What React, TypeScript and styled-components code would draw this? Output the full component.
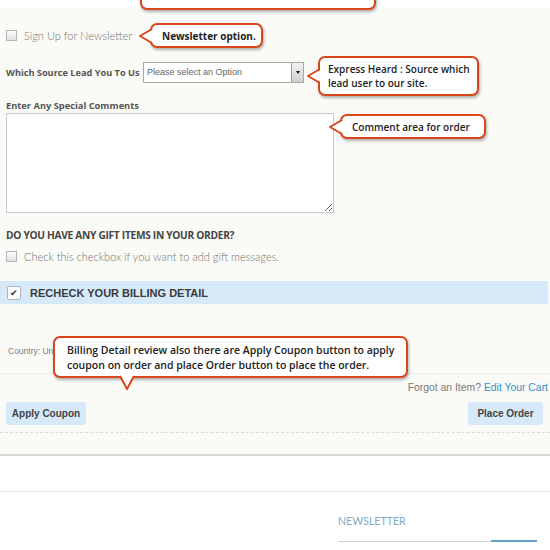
import styled, { createGlobalStyle } from "styled-components";

const GlobalStyle = createGlobalStyle`
  html, body {
    margin: 0;
    padding: 0;
    background: #fff;
  }
  body {
    font-family: "Lato", "Liberation Sans", sans-serif;
  }
`;

const Page = styled.div`
  position: relative;
  width: 550px;
  height: 550px;
  overflow: hidden;
  background: #fff;
`;

const TopStrip = styled.div`
  position: relative;
  height: 8px;
  background: #fff;
`;

const Checkout = styled.div`
  background: #fafaf6;
  padding: 19px 6px 21px;
  border-bottom: 2px solid #d9d9d6;
`;

const CheckRow = styled.div<{ $gap?: number }>`
  position: relative;
  display: flex;
  align-items: center;
  height: 16px;
  margin-top: ${({ $gap }) => $gap ?? 0}px;
`;

const Box = styled.span`
  width: 9px;
  height: 9px;
  border: 1px solid #b4b4b4;
  background: linear-gradient(#fdfdfd, #e2e2e2);
  flex-shrink: 0;
`;

const CheckLabel = styled.span`
  margin-left: 7px;
  font-size: 11px;
  font-weight: 300;
  color: #737373;
`;

const FieldRow = styled.div`
  position: relative;
  display: flex;
  align-items: center;
  height: 21px;
  margin-top: 19px;
`;

const FieldLabel = styled.span`
  font-family: "Open Sans", sans-serif;
  font-weight: 700;
  font-size: 9.2px;
  color: #555;
  width: 137px;
  white-space: nowrap;
`;

const Select = styled.div`
  display: flex;
  width: 161px;
  height: 21px;
  box-sizing: border-box;
  border: 1px solid #a9a9a9;
  background: #fff;
`;

const SelectText = styled.span`
  flex: 1;
  padding-left: 3px;
  font-family: "Liberation Sans", Arial, sans-serif;
  font-size: 9px;
  line-height: 19px;
  color: #666;
`;

const SelectArrow = styled.span`
  width: 11px;
  border-left: 1px solid #9a9a9a;
  background: linear-gradient(#f2f2f2, #cfcfcf);
  display: flex;
  align-items: center;
  justify-content: center;
  &::after {
    content: "";
    border-left: 2.5px solid transparent;
    border-right: 2.5px solid transparent;
    border-top: 3px solid #111;
  }
`;

const StackLabel = styled.div`
  margin-top: 17px;
  font-family: "Open Sans", sans-serif;
  font-weight: 700;
  font-size: 9.3px;
  line-height: 12px;
  color: #555;
`;

const CommentWrap = styled.div`
  position: relative;
  margin-top: 1px;
  height: 100px;
`;

const Comment = styled.textarea`
  display: block;
  width: 328px;
  height: 100px;
  box-sizing: border-box;
  border: 1px solid #c8c8c8;
  background: #fff;
  resize: both;
  margin: 0;
`;

const SectionHeading = styled.div`
  margin-top: 15px;
  font-family: "Open Sans", sans-serif;
  font-weight: 700;
  font-size: 10.2px;
  line-height: 14px;
  letter-spacing: -0.3px;
  color: #444;
`;

const ReviewBar = styled.div`
  display: flex;
  align-items: center;
  gap: 9px;
  height: 23px;
  margin: 17px -4px 0 -6px;
  padding-left: 7px;
  background: #d6e9f9;
`;

const CheckedBox = styled.span`
  width: 12px;
  height: 12px;
  border: 1px solid #a8b4be;
  border-radius: 2px;
  background: #fff;
  display: flex;
  align-items: center;
  justify-content: center;
  font-size: 9px;
  color: #333;
`;

const ReviewTitle = styled.span`
  font-family: "Liberation Sans", Arial, sans-serif;
  font-weight: 700;
  font-size: 11px;
  color: #3a3a3a;
`;

const ReviewBody = styled.div`
  position: relative;
  margin: 0 -6px;
  padding: 41px 8px 16px;
  border-bottom: 1px solid #efefea;
`;

const SmallText = styled.div`
  font-family: "Liberation Sans", Arial, sans-serif;
  font-size: 8.5px;
  line-height: 12px;
  color: #808080;
`;

const CartRow = styled.div`
  margin: 7px -4px 0 0;
  text-align: right;
  font-family: "Liberation Sans", Arial, sans-serif;
  font-size: 10.4px;
  line-height: 14px;
  color: #7a7a7a;
`;

const CartLink = styled.span`
  color: #3b8fc5;
`;

const ActionRow = styled.div`
  display: flex;
  justify-content: space-between;
  margin: 7px -6px 0;
  padding: 0 7px 7px 6px;
  border-bottom: 1px dashed #dcdcd6;
`;

const Button = styled.button<{ $width: number }>`
  width: ${({ $width }) => $width}px;
  height: 23px;
  border: none;
  border-radius: 3px;
  background: #d6e9f9;
  font-family: "Liberation Sans", Arial, sans-serif;
  font-weight: 700;
  font-size: 10px;
  color: #444;
  padding: 0;
`;

const Gap = styled.div`
  height: 35px;
  border-bottom: 1px solid #e6e6e6;
`;

const Footer = styled.div`
  display: flex;
  justify-content: flex-end;
  padding-right: 13px;
`;

const NewsCol = styled.div`
  width: 199px;
`;

const NewsTitle = styled.div`
  margin-top: 22px;
  font-family: "Lato", sans-serif;
  font-size: 10.6px;
  line-height: 14px;
  color: #7fa9c6;
`;

const NewsInput = styled.div`
  display: flex;
  align-items: flex-end;
  margin-top: 12px;
`;

const NewsField = styled.span`
  flex: 1;
  border-bottom: 1px solid #cfd6da;
`;

const NewsButton = styled.span`
  width: 46px;
  border-bottom: 2px solid #5fa3cc;
`;

/* annotation callouts laid over the form */
const Callout = styled.div`
  position: absolute;
  z-index: 2;
  background: #fff;
  border: 2px solid #d8461c;
  border-radius: 7px;
  box-shadow: 1px 2px 3px rgba(0, 0, 0, 0.3);
  font-family: "Open Sans", sans-serif;
  font-weight: 600;
  font-size: 10px;
  line-height: 14px;
  color: #222;
  white-space: nowrap;
  box-sizing: border-box;
`;

const PointerLeft = styled.svg`
  position: absolute;
  left: -14px;
  top: 50%;
  margin-top: -8px;
`;

const PointerDown = styled.svg`
  position: absolute;
  bottom: -15px;
`;

function LeftPointer() {
  return (
    <PointerLeft width="16" height="16" viewBox="0 0 16 16">
      <polygon points="16,1 2,8 16,15" fill="#fff" />
      <polyline points="14,1 2,8 14,15" fill="none" stroke="#d8461c" strokeWidth="2" strokeLinejoin="round" />
    </PointerLeft>
  );
}

function DownPointer({ left }: { left: number }) {
  return (
    <PointerDown width="16" height="16" viewBox="0 0 16 16" style={{ left }}>
      <polygon points="1,0 8,14 15,0" fill="#fff" />
      <polyline points="1,1 8,14 15,1" fill="none" stroke="#d8461c" strokeWidth="2" strokeLinejoin="round" />
    </PointerDown>
  );
}

export default function App() {
  return (
    <Page>
      <GlobalStyle />
      <TopStrip>
        <Callout style={{ left: 140, top: -40, width: 236, height: 50 }} />
      </TopStrip>
      <Checkout>
        <CheckRow>
          <Box />
          <CheckLabel>Sign Up for Newsletter</CheckLabel>
          <Callout style={{ left: 144, top: -4, width: 113, height: 25, padding: "4px 0 0 10px", fontWeight: 700 }}>
            <LeftPointer />
            Newsletter option.
          </Callout>
        </CheckRow>
        <FieldRow>
          <FieldLabel>Which Source Lead You To Us</FieldLabel>
          <Select>
            <SelectText>Please select an Option</SelectText>
            <SelectArrow />
          </Select>
          <Callout style={{ left: 312, top: -6, width: 161, height: 40, padding: "4px 0 0 8px" }}>
            <LeftPointer />
            Express Heard : Source which
            <br />
            lead user to our site.
          </Callout>
        </FieldRow>
        <StackLabel>Enter Any Special Comments</StackLabel>
        <CommentWrap>
          <Comment />
          <Callout style={{ left: 334, top: 1, width: 146, height: 25, padding: "4px 0 0 10px" }}>
            <LeftPointer />
            Comment area for order
          </Callout>
        </CommentWrap>
        <SectionHeading>DO YOU HAVE ANY GIFT ITEMS IN YOUR ORDER?</SectionHeading>
        <CheckRow $gap={6}>
          <Box />
          <CheckLabel>Check this checkbox if you want to add gift messages.</CheckLabel>
        </CheckRow>
        <ReviewBar>
          <CheckedBox>✔</CheckedBox>
          <ReviewTitle>RECHECK YOUR BILLING DETAIL</ReviewTitle>
        </ReviewBar>
        <ReviewBody>
          <SmallText>Country: United States</SmallText>
          <Callout style={{ left: 53, top: 32, width: 355, height: 42, padding: "5px 0 0 12px", fontSize: 10.5, lineHeight: "15px" }}>
            <DownPointer left={64} />
            Billing Detail review also there are Apply Coupon button to apply
            <br />
            coupon on order and place Order button to place the order.
          </Callout>
        </ReviewBody>
        <CartRow>
          Forgot an Item? <CartLink>Edit Your Cart</CartLink>
        </CartRow>
        <ActionRow>
          <Button $width={80}>Apply Coupon</Button>
          <Button $width={75}>Place Order</Button>
        </ActionRow>
      </Checkout>
      <Gap />
      <Footer>
        <NewsCol>
          <NewsTitle>NEWSLETTER</NewsTitle>
          <NewsInput>
            <NewsField />
            <NewsButton />
          </NewsInput>
        </NewsCol>
      </Footer>
    </Page>
  );
}
